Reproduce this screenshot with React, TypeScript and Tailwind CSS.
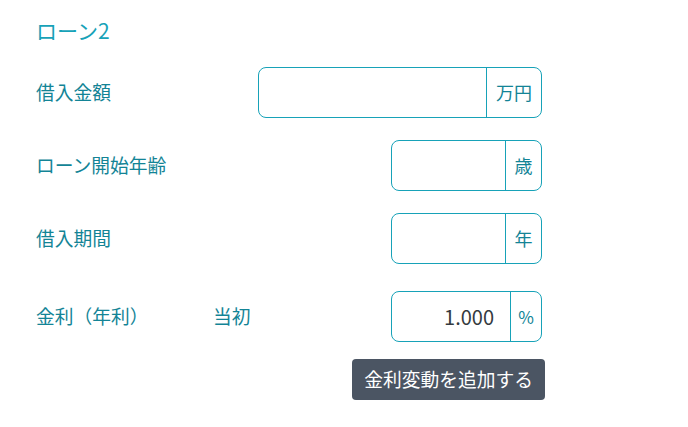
import React from "react";

const font = { fontFamily: '"Noto Sans CJK JP", "Noto Sans", sans-serif' };

function Group({ width, unitWidth, unit, value, unitSize = "text-[18px]" }: { width: number; unitWidth: number; unit: string; value?: string; unitSize?: string }) {
  return (
    <div className="flex h-[51px] rounded-[8px] border border-[#17a2b8] bg-white" style={{ width }}>
      <div className="flex flex-1 items-center justify-end pr-[16px] text-[20px] text-[#343a40]">{value}</div>
      <div className={`flex items-center justify-center border-l border-[#17a2b8] text-[#138496] ${unitSize}`} style={{ width: unitWidth }}>
        {unit}
      </div>
    </div>
  );
}

export default function App() {
  return (
    <div className="min-h-[427px] w-[688px] bg-white pl-[36px] pt-[15px]" style={font}>
      <div className="w-[506px]">
        <div className="h-[30px] text-[21px] leading-[30px] text-[#17a2b8]">ローン2</div>
        <div className="mt-[22px] flex items-center justify-between">
          <div className="text-[18.75px] text-[#138496]">借入金額</div>
          <Group width={284} unitWidth={55} unit="万円" />
        </div>
        <div className="mt-[22px] flex items-center justify-between">
          <div className="text-[18.75px] text-[#138496]">ローン開始年齢</div>
          <Group width={151} unitWidth={36} unit="歳" />
        </div>
        <div className="mt-[22px] flex items-center justify-between">
          <div className="text-[18.75px] text-[#138496]">借入期間</div>
          <Group width={151} unitWidth={36} unit="年" />
        </div>
        <div className="mt-[27px] flex items-center">
          <div className="w-[177px] text-[18.75px] text-[#138496]">金利（年利）</div>
          <div className="text-[18.75px] text-[#138496]">当初</div>
          <div className="ml-auto">
            <Group width={151} unitWidth={31} unit="%" value="1.000" unitSize="text-[17px]" />
          </div>
        </div>
        <div className="mt-[17px] flex justify-end">
          <button className="-mr-[3px] h-[41px] rounded-[4px] bg-[#4b5563] px-[12px] text-[18.75px] text-white">
            金利変動を追加する
          </button>
        </div>
      </div>
    </div>
  );
}
